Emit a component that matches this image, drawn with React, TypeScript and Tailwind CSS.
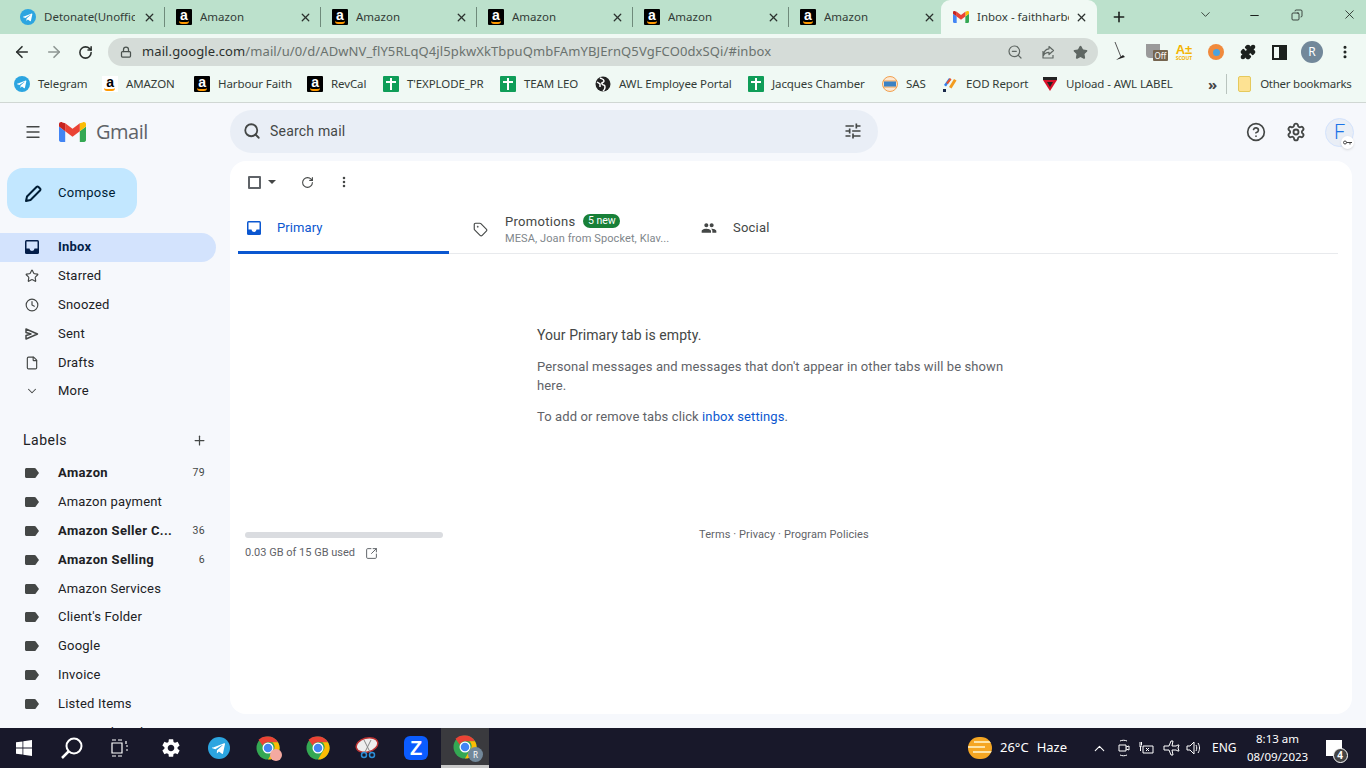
import React from "react";
import { ArrowLeft, ArrowRight, RotateCw, Lock, ZoomOut, Star, Puzzle, X, Plus, ChevronDown, Minus, MoreVertical, Menu, Search, CircleHelp, Settings, Clock, File, ChevronUp, Copy, Tag, SquareArrowOutUpRight } from "lucide-react";

const ui = "font-['Noto_Sans',sans-serif]";
const g = "font-['Roboto',sans-serif]";

function Amazon({ s = 16 }: { s?: number }) {
  return (
    <span className="relative flex shrink-0 items-start justify-center overflow-hidden rounded-[1px] bg-black" style={{ width: s, height: s }}>
      <span className="font-['Liberation_Sans',sans-serif] text-[14px] leading-[13px] font-bold text-white">a</span>
      <span className="absolute bottom-[1px] left-[3px] h-[3px] w-[10px] rounded-b-full border-b-2 border-[#f90]" />
    </span>
  );
}
function AmazonWhite() {
  return (
    <span className="relative flex h-4 w-4 shrink-0 items-start justify-center bg-white">
      <span className="font-['Liberation_Sans',sans-serif] text-[14px] leading-[13px] font-bold text-black">a</span>
      <span className="absolute bottom-[1px] left-[2px] h-[3px] w-[11px] rounded-b-full border-b-2 border-[#f90]" />
    </span>
  );
}
function Tele({ s = 16 }: { s?: number }) {
  return (
    <svg width={s} height={s} viewBox="0 0 24 24" className="shrink-0">
      <circle cx="12" cy="12" r="12" fill="#2ca5e0" />
      <path d="M5 11.8l12.6-5c.6-.2 1.1.2.9 1l-2.1 10c-.2.7-.6.9-1.2.5l-3.3-2.4-1.6 1.5c-.2.2-.3.3-.7.3l.2-3.3 6.1-5.5c.3-.2-.1-.4-.4-.2l-7.5 4.7-3.2-1c-.7-.2-.7-.7.2-1.1z" fill="#fff" />
    </svg>
  );
}
function Sheet() {
  return (
    <span className="relative h-4 w-4 shrink-0 rounded-[1px] bg-[#0f9d58]">
      <span className="absolute top-[5px] left-[3px] h-[2px] w-[10px] bg-white" />
      <span className="absolute top-[2px] left-[7px] h-[12px] w-[2px] bg-white" />
    </span>
  );
}
function GmailM({ w = 16, h = 12 }: { w?: number; h?: number }) {
  return (
    <svg width={w} height={h} viewBox="0 0 27 20" className="shrink-0">
      <path d="M1.8 20h4.4V9.3L0 4.6v13.5C0 19.1.8 20 1.8 20z" fill="#4285f4" />
      <path d="M20.8 20h4.4c1 0 1.8-.9 1.8-1.9V4.6l-6.2 4.7z" fill="#34a853" />
      <path d="M20.8 1.2v8.1L27 4.6V2.2C27 .4 25-.6 23.6.5z" fill="#fbbc04" />
      <path d="M6.2 9.3V1.2l7.3 5.5 7.3-5.5v8.1l-7.3 5.5z" fill="#ea4335" />
      <path d="M0 2.2v2.4l6.2 4.7V1.2L3.4.5C2-.6 0 .4 0 2.2z" fill="#c5221f" />
    </svg>
  );
}
function ChromeIcon({ s = 24 }: { s?: number }) {
  return (
    <svg width={s} height={s} viewBox="0 0 48 48" className="shrink-0">
      <circle cx="24" cy="24" r="23" fill="#34a853" />
      <path d="M24 1a23 23 0 0 1 20 11.5H24a11.5 11.5 0 0 0-10.500 7L5 7.500A23 23 0 0 1 24 1z" fill="#ea4335" />
      <path d="M44 12.500A23 23 0 0 1 24 47l10-17a11.500 11.500 0 0 0-1.500-17.500z" fill="#fbbc04" />
      <circle cx="24" cy="24" r="11" fill="#fff" />
      <circle cx="24" cy="24" r="8.5" fill="#4285f4" />
    </svg>
  );
}
function LabelIcon() {
  return (
    <svg width="14" height="10" viewBox="0 0 14 10" className="shrink-0">
      <path d="M1.5 0h8c.5 0 .9.2 1.2.6L14 5l-3.3 4.4c-.3.4-.7.6-1.2.6h-8C.7 10 0 9.3 0 8.500v-7C0 .7.7 0 1.500 0z" fill="#444746" />
    </svg>
  );
}
function InboxIcon({ c, f = "#fff" }: { c: string; f?: string }) {
  return (
    <svg width="14" height="14" viewBox="0 0 14 14" className="shrink-0">
      <rect width="14" height="14" rx="1.5" fill={c} />
      <path d="M1.5 1.5h11v7H9.500a2.500 2.500 0 0 1-5 0H1.500z" fill={f} />
    </svg>
  );
}

const tabs = ["Detonate(Unofficial", "Amazon", "Amazon", "Amazon", "Amazon", "Amazon"];

function TabStrip() {
  return (
    <div className={`flex h-[34px] shrink-0 bg-[#bce1cc] pl-[9px] ${ui}`}>
      {tabs.map((t, i) => (
        <div key={i} className="flex h-full w-[156px] shrink-0 items-center pl-[11px]">
          {i === 0 ? <Tele /> : <Amazon />}
          <span className="ml-2 w-[91px] overflow-hidden text-[11.5px] whitespace-nowrap text-[#333c37]">{t}</span>
          <X size={13} strokeWidth={2.4} className="ml-[8px] shrink-0 text-[#2b312e]" />
          <span className={`ml-[8px] h-[20px] w-px ${i < 5 ? "bg-[#6f8a7b]" : ""}`} />
        </div>
      ))}
      <div className="relative ml-[-4px] flex h-full w-[156px] shrink-0 items-center rounded-t-[9px] bg-[#f0f9f4] pl-[12px]">
        <GmailM />
        <span className="ml-2 w-[92px] overflow-hidden text-[11.5px] whitespace-nowrap text-[#333c37]">Inbox - faithharbour</span>
        <X size={13} strokeWidth={2.4} className="ml-[6px] shrink-0 text-[#2b312e]" />
      </div>
      <Plus size={16} strokeWidth={2.4} className="mt-[9px] ml-[14px] shrink-0 text-[#1c211e]" />
      <ChevronDown size={15} strokeWidth={1.3} className="mt-[7px] ml-[71px] shrink-0 text-[#1c211e]" />
      <Minus size={13} strokeWidth={2} className="mt-[9px] ml-[35px] shrink-0 text-[#1c211e]" />
      <Copy size={12} strokeWidth={1.6} className="mt-[9px] ml-[30px] shrink-0 scale-x-[-1] text-[#1c211e]" />
      <X size={15} strokeWidth={1.3} className="mt-[7px] ml-[39px] shrink-0 text-[#1c211e]" />
    </div>
  );
}

function Toolbar() {
  return (
    <div className={`flex h-[34px] shrink-0 items-center bg-[#f0f9f4] pt-[2px] ${ui}`}>
      <ArrowLeft size={18} strokeWidth={2.2} className="ml-[13px] shrink-0 text-[#2b312e]" />
      <ArrowRight size={18} strokeWidth={2.2} className="ml-[14px] shrink-0 text-[#8d9692]" />
      <RotateCw size={15} strokeWidth={2.5} className="ml-[15px] shrink-0 text-[#2b312e]" />
      <div className="ml-[15px] flex h-[28px] w-[990px] shrink-0 items-center rounded-full bg-[#d5dcd8]">
        <Lock size={12} strokeWidth={2.5} className="ml-[12px] shrink-0 text-[#4a524e]" />
        <span className="ml-[10px] text-[13px] tracking-[0.1px] whitespace-nowrap text-[#6a726e]">
          <span className="text-[#2b312e]">mail.google.com</span>/mail/u/0/d/ADwNV_flY5RLqQ4jl5pkwXkTbpuQmbFAmYBJErnQ5VgFCO0dxSQi/#inbox
        </span>
        <div className="ml-auto flex items-center gap-[17px] pr-[10px] text-[#5f6763]">
          <ZoomOut size={16} strokeWidth={1.8} />
          <svg width="16" height="16" viewBox="0 0 16 16"><path d="M3 7v7h10v-3M9 2.5l4.5 4L9 10.500V8.300C6 8.300 4.500 9.500 3.500 11.500 3.800 7.500 6 5 9 4.800z" fill="none" stroke="currentColor" strokeWidth="1.2" strokeLinejoin="round" /></svg>
          <Star size={15} fill="currentColor" />
        </div>
      </div>
      <svg width="14" height="22" viewBox="0 0 14 22" className="ml-[15px] shrink-0">
        <path d="M2 1l6 15" stroke="#555" strokeWidth="1" />
        <path d="M3 19l9-3-2-2z" fill="#222" />
      </svg>
      <span className="relative ml-[19px] h-[18px] w-[22px] shrink-0">
        <span className="absolute top-[1px] left-0 h-[14px] w-[14px] rounded-b-[4px] bg-[#9a9a9a]" />
        <span className="absolute right-0 bottom-0 h-[11px] w-[15px] rounded-[1px] bg-[#75654f] text-center text-[8px] leading-[11px] text-white">Off</span>
      </span>
      <span className="ml-[7px] flex w-[18px] shrink-0 flex-col items-center text-[#f4b400]">
        <span className="font-['Liberation_Sans',sans-serif] text-[13px] leading-[12px] font-bold">A±</span>
        <span className="text-[5px] leading-[5px] font-bold">SCOUT</span>
      </span>
      <span className="ml-[15px] flex h-4 w-4 shrink-0 items-center justify-center rounded-full bg-[#f08a3c]">
        <span className="h-[7px] w-[7px] rounded-full bg-[#4aa3df]" />
      </span>
      <Puzzle size={16} fill="currentColor" className="ml-[16px] shrink-0 text-[#1c211e]" />
      <span className="ml-[16px] flex h-[15px] w-[15px] shrink-0 justify-end border-2 border-[#1c211e]">
        <span className="h-full w-[6px] bg-[#1c211e]" />
      </span>
      <span className="ml-[14px] flex h-[22px] w-[22px] shrink-0 items-center justify-center rounded-full bg-[#72889a] text-[12px] text-white">R</span>
      <MoreVertical size={16} strokeWidth={2.6} className="ml-[14px] shrink-0 text-[#1c211e]" />
    </div>
  );
}

const marks: [React.ReactNode, string, number][] = [
  [<Tele />, "Telegram", 48],
  [<AmazonWhite />, "AMAZON", 52],
  [<Amazon />, "Harbour Faith", 73],
  [<Amazon />, "RevCal", 36],
  [<Sheet />, "T'EXPLODE_PR", 77],
  [<Sheet />, "TEAM LEO", 55],
  [
    <svg width="16" height="16" viewBox="0 0 16 16" className="shrink-0"><circle cx="8" cy="8" r="7.5" fill="#222" /><path d="M5 2c2 1 4 1 4 3S6 6 7 8s3 0 3 3-1 3-2 4M2 6l3 2v3" stroke="#fff" strokeWidth="1.5" fill="none" /></svg>,
    "AWL Employee Portal",
    113,
  ],
  [<Sheet />, "Jacques Chamber", 94],
  [
    <svg width="16" height="16" viewBox="0 0 16 16" className="shrink-0"><circle cx="8" cy="8" r="7.5" fill="#fde7d0" stroke="#f0a050" /><path d="M1 5h14M1 11h14" stroke="#f0a050" /><rect x="2" y="5.5" width="12" height="5" fill="#3b82c4" /></svg>,
    "SAS",
    20,
  ],
  [
    <svg width="16" height="16" viewBox="0 0 16 16" className="shrink-0"><path d="M2 9l5-7 2 1.5-5 7z" fill="#2f80ed" /><path d="M7 11l5-8 2.500 1.500-5 8z" fill="#f39c1f" /><path d="M4 7l4-5 1.500 1.500L6 8z" fill="#e8552d" /><rect x="1" y="13" width="3" height="3" fill="#1a2a4a" /></svg>,
    "EOD Report",
    60,
  ],
  [
    <svg width="16" height="16" viewBox="0 0 16 16" className="shrink-0"><rect x="1" y="1" width="14" height="3" fill="#222" /><path d="M1 4h14l-7 11z" fill="#d8122b" /><path d="M5 6h6l-3 5z" fill="#222" /></svg>,
    "Upload - AWL LABEL",
    109,
  ],
];

function Bookmarks() {
  return (
    <div className={`flex h-[35px] shrink-0 items-center border-b border-[#d0d7d3] bg-[#f0f9f4] pb-[2px] pl-[14px] text-[11.5px] tracking-[-0.1px] text-[#333c37] ${ui}`}>
      {marks.map(([ic, t, w], i) => (
        <div key={i} className="mr-[16px] flex shrink-0 items-center gap-2">
          {ic}
          <span className="whitespace-nowrap" style={{ width: w }}>{t}</span>
        </div>
      ))}
      <span className="ml-[17px] text-[15px] leading-none font-bold text-[#444]">»</span>
      <span className="ml-[9px] h-[20px] w-px bg-[#b9c4be]" />
      <span className="ml-[11px] h-[16px] w-[13px] shrink-0 rounded-[2px] border border-[#e5c95c] bg-[#fde293]" />
      <span className="ml-[9px] whitespace-nowrap tracking-[-0.25px]">Other bookmarks</span>
    </div>
  );
}

const nav: [React.ReactNode, string][] = [
  [<Star size={16} strokeWidth={2} className="text-[#444746]" />, "Starred"],
  [<Clock size={16} strokeWidth={2} className="text-[#444746]" />, "Snoozed"],
  [
    <svg width="14" height="12" viewBox="0 0 14 12"><path d="M1 1l11.5 5L1 11V7.500L6 6 1 4.500z" fill="none" stroke="#444746" strokeWidth="1.5" strokeLinejoin="round" /></svg>,
    "Sent",
  ],
  [<File size={16} strokeWidth={2} className="text-[#444746]" />, "Drafts"],
];

const labels: [string, boolean, string][] = [
  ["Amazon", true, "79"],
  ["Amazon payment", false, ""],
  ["Amazon Seller C...", true, "36"],
  ["Amazon Selling", true, "6"],
  ["Amazon Services", false, ""],
  ["Client's Folder", false, ""],
  ["Google", false, ""],
  ["Invoice", false, ""],
  ["Listed Items", false, ""],
  ["more on listed items", false, ""],
];

function Sidebar() {
  return (
    <aside className={`flex w-[230px] shrink-0 flex-col overflow-hidden text-[13px] tracking-[0.2px] text-[#202124] ${g}`}>
      <div className="flex h-[58px] shrink-0 items-center pl-[24px]">
        <Menu size={18} strokeWidth={1.8} className="text-[#444746]" />
        <span className="ml-[17px]"><GmailM w={27} h={20} /></span>
        <span className="ml-[10px] font-['Open_Sans',sans-serif] text-[20px] leading-none tracking-[-0.5px] text-[#5f6368]">Gmail</span>
      </div>
      <div className="mt-[7px] ml-[7px] flex h-[50px] w-[130px] shrink-0 items-center rounded-[16px] bg-[#c2e7ff] pl-[18px]">
        <svg width="17" height="17" viewBox="0 0 17 17"><path d="M1 16l1-4.5L11.500 2a1.500 1.500 0 0 1 2 0l1.500 1.500a1.500 1.500 0 0 1 0 2L5.500 15z" fill="none" stroke="#001d35" strokeWidth="2" strokeLinejoin="round" /></svg>
        <span className="ml-[16px] tracking-[0.3px] text-[#001d35]">Compose</span>
      </div>
      <div className="mt-[15px] mr-[14px] mb-[-1px] flex h-[29px] shrink-0 items-center rounded-r-full bg-[#d3e3fd] pb-[2px] pl-[25px] font-bold text-[#041e49]">
        <InboxIcon c="#041e49" f="#d3e3fd" />
        <span className="ml-[19px]">Inbox</span>
      </div>
      {nav.map(([ic, t]) => (
        <div key={t} className="flex h-[29px] shrink-0 items-center pl-[25px]">
          <span className="flex w-[14px] justify-center">{ic}</span>
          <span className="ml-[19px]">{t}</span>
        </div>
      ))}
      <div className="flex h-[28px] shrink-0 items-center pl-[25px]">
        <ChevronDown size={14} strokeWidth={1.8} className="text-[#444746]" />
        <span className="ml-[19px]">More</span>
      </div>
      <div className="mt-[21px] flex h-[29px] shrink-0 items-center justify-between px-[23px]">
        <span className="text-[14px] tracking-[0.5px]">Labels</span>
        <Plus size={15} strokeWidth={2} className="text-[#444746]" />
      </div>
      <div className="mt-[3px] flex flex-col">
        {labels.map(([t, b, n], i) => (
          <div key={t} className={`flex shrink-0 items-center px-[25px] ${i === 5 ? "h-[28px]" : "h-[29px]"} ${b ? "font-bold tracking-[0.35px]" : ""}`}>
            <LabelIcon />
            <span className="ml-[19px] whitespace-nowrap">{t}</span>
            <span className="ml-auto text-[10.5px] font-normal text-[#444746]">{n}</span>
          </div>
        ))}
      </div>
    </aside>
  );
}

function Main() {
  return (
    <div className={`flex min-w-0 flex-1 flex-col text-[#444746] ${g}`}>
      <div className="flex h-[58px] shrink-0 items-center">
        <div className="mb-[2px] flex h-[43px] w-[648px] items-center rounded-full bg-[#e9eef6] pr-[15px] pl-[13px]">
          <Search size={18} strokeWidth={2.4} className="text-[#444746]" />
          <span className="ml-[9px] text-[14px] tracking-[0.2px] text-[#444746]">Search mail</span>
          <svg width="20" height="20" viewBox="0 0 24 24" fill="#444746" className="ml-auto"><path d="M3 17v2h6v-2H3zM3 5v2h10V5H3zm10 16v-2h8v-2h-8v-2h-2v6h2zM7 9v2H3v2h4v2h2V9H7zm14 4v-2H11v2h10zm-6-4h2V7h4V5h-4V3h-2v6z" /></svg>
        </div>
        <CircleHelp size={20} strokeWidth={2} className="ml-[368px]" />
        <Settings size={20} strokeWidth={2.2} className="ml-[20px]" />
        <span className="relative ml-[19px] flex h-[29px] w-[29px] items-center justify-center rounded-full border border-[#d3e3fd] bg-[#e9eef6] text-[20px] font-light text-[#1a73e8]">
          F
          <span className="absolute right-[-1px] bottom-[-3px] flex h-[13px] w-[13px] items-center justify-center rounded-full bg-white shadow">
            <svg width="9" height="5" viewBox="0 0 9 5"><circle cx="2" cy="2.5" r="1.5" fill="none" stroke="#444" /><path d="M3.5 2.500H9M7 2.500v2" stroke="#444" /></svg>
          </span>
        </span>
      </div>
      <div className="mr-[14px] mb-[14px] flex flex-1 flex-col rounded-[16px] bg-white pt-[2px]">
        <div className="flex h-[38px] shrink-0 items-center pl-[18px]">
          <span className="h-[13px] w-[13px] rounded-[1px] border-2 border-[#5f6368]" />
          <span className="ml-[7px] h-0 w-0 border-x-[4px] border-t-[4px] border-x-transparent border-t-[#444746]" />
          <RotateCw size={13} strokeWidth={2} className="ml-[25px]" />
          <MoreVertical size={14} strokeWidth={2.4} className="ml-[23px]" />
        </div>
        <div className="mt-[5px] mr-[14px] ml-[8px] flex h-[48px] shrink-0 border-b border-[#e8eaed]">
          <div className="flex h-[48px] w-[211px] items-center border-b-[3px] border-[#0b57d0] pb-[1px] pl-[9px] text-[13px] tracking-[0.1px] text-[#0b57d0]">
            <InboxIcon c="#0b57d0" />
            <span className="ml-[16px]">Primary</span>
          </div>
          <div className="flex h-[47px] w-[239px] items-center pl-[24px]">
            <Tag size={15} strokeWidth={1.8} />
            <div className="ml-[17px]">
              <div className="flex items-center text-[13px] tracking-[0.3px] text-[#444746]">
                Promotions
                <span className="ml-[8px] h-[14px] rounded-full bg-[#188038] px-[4.5px] text-[10.5px] leading-[14px] tracking-normal text-white">5 new</span>
              </div>
              <div className="text-[11px] tracking-[0.1px] whitespace-nowrap text-[#80868b]">MESA, Joan from Spocket, Klav...</div>
            </div>
          </div>
          <div className="flex h-[47px] items-center pb-[4px] pl-[13px] text-[13px] tracking-[0.2px]">
            <svg width="16" height="16" viewBox="0 0 24 24" fill="#444746"><path d="M16 11c1.66 0 2.99-1.34 2.99-3S17.66 5 16 5s-3 1.34-3 3 1.34 3 3 3zm-8 0c1.66 0 2.99-1.34 2.99-3S9.66 5 8 5 5 6.34 5 8s1.34 3 3 3zm0 2c-2.33 0-7 1.17-7 3.5V19h14v-2.5C15 14.17 10.33 13 8 13zm8 0c-.29 0-.62.02-.97.05 1.16.84 1.97 1.97 1.97 3.45V19h6v-2.5c0-2.33-4.67-3.5-7-3.5z" /></svg>
            <span className="ml-[16px]">Social</span>
          </div>
        </div>
        <div className="mt-[72px] ml-[307px] w-[480px] text-[13px] leading-[19px] tracking-[0.1px] text-[#5f6368]">
          <p className="text-[14px] tracking-[0.05px] text-[#444746]">Your Primary tab is empty.</p>
          <p className="mt-[12px]">Personal messages and messages that don't appear in other tabs will be shown here.</p>
          <p className="mt-[12px]">To add or remove tabs click <span className="text-[#0b57d0]">inbox settings</span>.</p>
        </div>
        <div className="mt-[105px] flex px-[15px] text-[11px] text-[#5f6368]">
          <div className="w-[198px]">
            <div className="mt-[1px] h-[6px] rounded-full bg-[#dadce0]" />
            <div className="mt-[7px] flex items-center whitespace-nowrap">
              0.03 GB of 15 GB used
              <SquareArrowOutUpRight size={13} strokeWidth={1.8} className="ml-[10px]" />
            </div>
          </div>
          <div className="mt-[-4px] ml-[256px] tracking-[0.1px] whitespace-nowrap">Terms · Privacy · Program Policies</div>
        </div>
      </div>
    </div>
  );
}

function Taskbar() {
  return (
    <div className={`flex h-[40px] shrink-0 items-center bg-[#18182a] text-white ${ui}`}>
      <svg width="16" height="16" viewBox="0 0 16 16" className="ml-[16px] shrink-0"><path d="M0 2.3l6.5-.9v6.2H0zM7.3 1.3L16 0v7.6H7.3zM0 8.4h6.5v6.2L0 13.7zM7.3 8.4H16V16l-8.7-1.2z" fill="#fff" /></svg>
      <svg width="24" height="24" viewBox="0 0 24 24" className="ml-[28px] shrink-0"><circle cx="14" cy="10" r="7.5" fill="none" stroke="#fff" strokeWidth="2" /><path d="M8.5 15.5L2 22" stroke="#fff" strokeWidth="2.5" /></svg>
      <svg width="18" height="18" viewBox="0 0 18 18" className="ml-[27px] shrink-0"><path d="M1 4h10v10H1zM1 1h4M7 1h4M1 17h4M7 17h4M15 2v3M15 7h2M15 11h2" stroke="#fff" fill="none" strokeWidth="1.2" /></svg>
      <svg width="22" height="22" viewBox="0 0 24 24" fill="#fff" className="ml-[31px] shrink-0"><path d="M19.14 12.94c.04-.3.06-.61.06-.94 0-.32-.02-.64-.07-.94l2.03-1.58c.18-.14.23-.41.12-.61l-1.92-3.32c-.12-.22-.37-.29-.59-.22l-2.39.96c-.5-.38-1.03-.7-1.62-.94l-.36-2.54c-.04-.24-.24-.41-.48-.41h-3.84c-.24 0-.43.17-.47.41l-.36 2.54c-.59.24-1.13.57-1.62.94l-2.39-.96c-.22-.08-.47 0-.59.22L2.74 8.87c-.12.21-.08.47.12.61l2.03 1.58c-.05.3-.09.63-.09.94s.02.64.07.94l-2.03 1.58c-.18.14-.23.41-.12.61l1.92 3.32c.12.22.37.29.59.22l2.39-.96c.5.38 1.03.7 1.62.94l.36 2.54c.05.24.24.41.48.41h3.84c.24 0 .44-.17.47-.41l.36-2.54c.59-.24 1.13-.56 1.62-.94l2.39.96c.22.08.47 0 .59-.22l1.92-3.32c.12-.22.07-.47-.12-.61l-2.01-1.58zM12 15.6c-1.98 0-3.6-1.62-3.6-3.6s1.62-3.6 3.6-3.6 3.6 1.62 3.6 3.6-1.62 3.6-3.6 3.6z" /></svg>
      <span className="ml-[26px]"><Tele s={22} /></span>
      <span className="relative ml-[26px]">
        <ChromeIcon />
        <span className="absolute right-[-2px] bottom-[-1px] h-3 w-3 rounded-full bg-[#f4a9a0]" />
      </span>
      <span className="ml-[26px]"><ChromeIcon /></span>
      <svg width="24" height="24" viewBox="0 0 24 24" className="ml-[25px] shrink-0">
        <ellipse cx="12" cy="9" rx="11" ry="7" fill="#eee" stroke="#b33" strokeWidth="1.5" transform="rotate(-15 12 9)" />
        <path d="M9 4l6 12M16 4l-6 12" stroke="#888" />
        <circle cx="9" cy="19" r="2.5" fill="none" stroke="#2b8fd8" strokeWidth="1.5" />
        <circle cx="17" cy="19" r="2.5" fill="none" stroke="#2b8fd8" strokeWidth="1.5" />
      </svg>
      <span className="ml-[25px] flex h-6 w-6 items-center justify-center rounded-[6px] bg-[#0b5cff] font-['Liberation_Sans',sans-serif] text-[20px] font-bold text-white">Z</span>
      <span className="relative ml-[13px] flex h-[40px] w-[48px] items-center justify-center border-b-[3px] border-[#c8c8c8] bg-[#3a3a3e]">
        <ChromeIcon />
        <span className="absolute right-[6px] bottom-[3px] flex h-[15px] w-[15px] items-center justify-center rounded-full bg-[#72889a] text-[8px]">R</span>
      </span>
      <span className="relative ml-[479px] h-[22px] w-[24px] shrink-0 overflow-hidden rounded-full bg-[#f5a623]">
        <span className="absolute top-[4px] left-[6px] h-[2px] w-[20px] bg-[#fde3a7]" />
        <span className="absolute top-[9px] left-0 h-[2px] w-[17px] bg-[#fde3a7]" />
        <span className="absolute top-[14px] left-[5px] h-[2px] w-[20px] bg-[#fde3a7]" />
      </span>
      <span className="ml-[8px] text-[13px] whitespace-nowrap">26°C</span>
      <span className="ml-[8px] text-[13px] whitespace-nowrap">Haze</span>
      <ChevronUp size={17} strokeWidth={1.5} className="ml-[24px] shrink-0" />
      <svg width="14" height="18" viewBox="0 0 14 18" className="ml-[9px] shrink-0"><path d="M2 6h7v6H2zM9 8l3-1v4l-3-1M3 2c2-1 5-1 7 0M3 16c2 1 5 1 7 0" fill="none" stroke="#fff" /></svg>
      <svg width="16" height="14" viewBox="0 0 16 14" className="ml-[7px] shrink-0"><path d="M5 5h10v7H5zM1 5h3M2 1v3M3.5 1v3M2.5 5v5M8 7l3 3M11 7l-3 3" fill="none" stroke="#fff" /></svg>
      <svg width="18" height="18" viewBox="0 0 18 18" className="ml-[9px] shrink-0"><path d="M1 7h5l2-5h2l-1 5h4l2-1h1l-1 3 1 3h-1l-2-1H9l1 5H8l-2-5H1z" fill="none" stroke="#fff" /></svg>
      <svg width="16" height="14" viewBox="0 0 16 14" className="ml-[5px] shrink-0"><path d="M1 5h3l4-4v12l-4-4H1zM10 4c1 2 1 4 0 6M12 2c2 3 2 7 0 10" fill="none" stroke="#fff" /></svg>
      <span className="ml-[10px] text-[12px] whitespace-nowrap">ENG</span>
      <div className="ml-[10px] flex w-[62px] flex-col items-center text-[11.5px] leading-[18px] whitespace-nowrap">
        <span>8:13 am</span>
        <span>08/09/2023</span>
      </div>
      <span className="relative ml-[17px] h-[16px] w-[16px] shrink-0">
        <span className="absolute inset-0 bg-white" />
        <span className="absolute right-[-6px] bottom-[-7px] flex h-[15px] w-[15px] items-center justify-center rounded-full border border-white bg-[#444] text-[10px] font-bold">4</span>
      </span>
    </div>
  );
}

export default function App() {
  return (
    <div className="flex h-[768px] w-[1366px] flex-col overflow-hidden bg-[#f6f8fc]">
      <TabStrip />
      <Toolbar />
      <Bookmarks />
      <div className="flex min-h-0 flex-1">
        <Sidebar />
        <Main />
      </div>
      <Taskbar />
    </div>
  );
}
